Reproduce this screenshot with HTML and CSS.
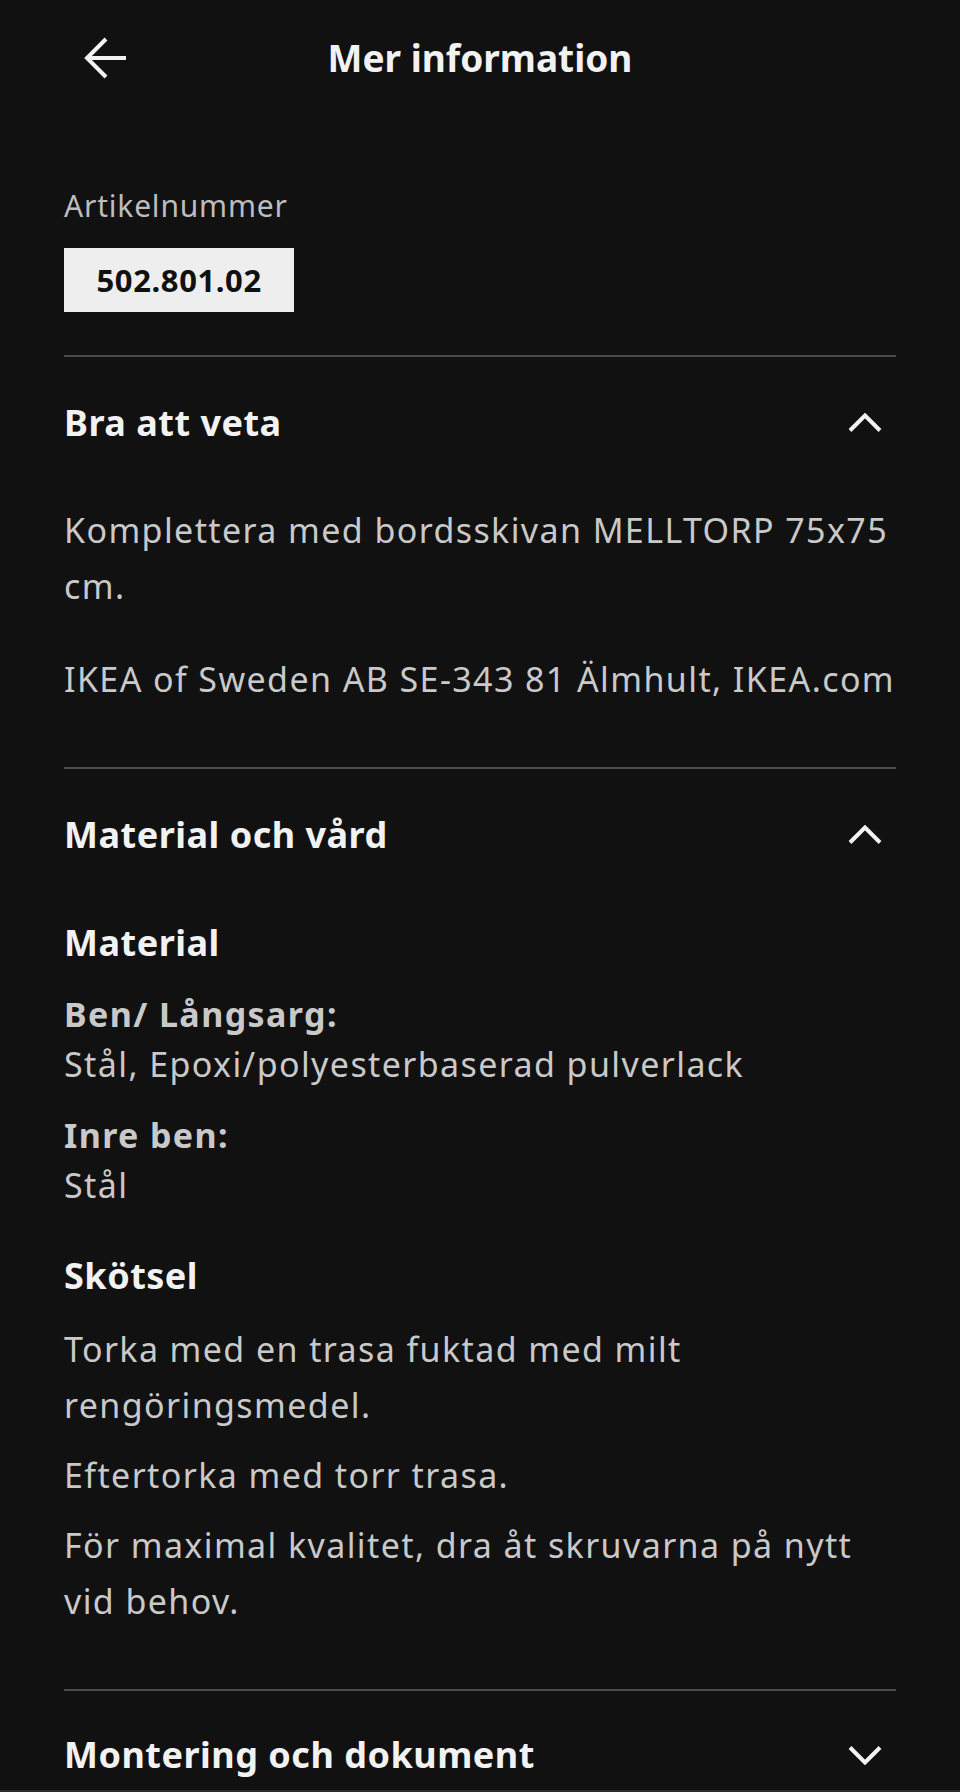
FILE: index.html
```html
<!DOCTYPE html>
<html lang="sv">
<head>
    <meta charset="UTF-8">
    <meta name="viewport" content="width=device-width, initial-scale=1.0">
    <title>Mer information</title>
    <link rel="stylesheet" href="styles.css">
</head>
<body>
    <div class="topbar">
        <div class="back">
            <svg width="48" height="48" viewBox="0 0 48 48">
                <path d="M44 24H5M24 5L5 24L24 43" fill="none" stroke="#f2f2f2" stroke-width="4"/>
            </svg>
        </div>
        <h1>Mer information</h1>
        <div></div>
    </div>

    <div class="page">
        <p class="label">Artikelnummer</p>
        <div class="artnr">502.801.02</div>

        <div class="section">
            <div class="section-head">
                <h2>Bra att veta</h2>
                <svg class="chev" width="34" height="20" viewBox="0 0 34 20">
                    <path d="M2 17.5L17 2.5L32 17.5" fill="none" stroke="#f2f2f2" stroke-width="4"/>
                </svg>
            </div>
            <div class="good">
                <p>Komplettera med bordsskivan MELLTORP 75x75 cm.</p>
                <p>IKEA of Sweden AB SE-343 81 Älmhult, IKEA.com</p>
            </div>
        </div>

        <div class="section">
            <div class="section-head">
                <h2>Material och vård</h2>
                <svg class="chev" width="34" height="20" viewBox="0 0 34 20">
                    <path d="M2 17.5L17 2.5L32 17.5" fill="none" stroke="#f2f2f2" stroke-width="4"/>
                </svg>
            </div>
            <div class="care">
                <h3 class="first">Material</h3>
                <dl>
                    <dt>Ben/ Långsarg:</dt>
                    <dd>Stål, Epoxi/polyesterbaserad pulverlack</dd>
                </dl>
                <dl>
                    <dt>Inre ben:</dt>
                    <dd>Stål</dd>
                </dl>
                <h3 class="second">Skötsel</h3>
                <p>Torka med en trasa fuktad med milt rengöringsmedel.</p>
                <p>Eftertorka med torr trasa.</p>
                <p>För maximal kvalitet, dra åt skruvarna på nytt vid behov.</p>
            </div>
        </div>

        <div class="section last">
            <div class="section-head">
                <h2>Montering och dokument</h2>
                <svg class="chev" width="34" height="20" viewBox="0 0 34 20">
                    <path d="M2 2.5L17 17.5L32 2.5" fill="none" stroke="#f2f2f2" stroke-width="4"/>
                </svg>
            </div>
        </div>
    </div>
    <div class="bottom"></div>
</body>
</html>
```

FILE: styles.css
```css
*{
    margin: 0;
    padding: 0;
    box-sizing: border-box;
}
body{
    background-color: #111111;
    color: #c9c9c9;
    font-family: "Noto Sans", "Open Sans", sans-serif;
    height: 1792px;
    overflow: hidden;
}
.topbar{
    height: 116px;
    display: grid;
    grid-template-columns: 1fr auto 1fr;
    align-items: center;
}
.back{
    padding-left: 82px;
    display: flex;
    align-items: center;
}
.topbar h1{
    font-size: 37px;
    font-weight: 700;
    color: #f2f2f2;
    line-height: 50px;
}
.page{
    padding: 0 64px;
}
.label{
    margin-top: 70px;
    font-size: 30px;
    line-height: 40px;
    letter-spacing: 0.8px;
    color: #bdbdbd;
}
.artnr{
    margin-top: 22px;
    display: inline-flex;
    align-items: center;
    height: 64px;
    padding: 0 32.5px;
    background-color: #eeeeee;
    color: #111111;
    font-size: 31px;
    font-weight: 700;
    letter-spacing: 0.6px;
}
.section{
    margin-top: 43px;
    border-top: 2px solid #4a4a4a;
    padding-bottom: 60px;
}
.section + .section{
    margin-top: 0;
}
.section.last{
    padding-bottom: 0;
}
.section-head{
    display: flex;
    align-items: center;
    justify-content: space-between;
    padding-top: 41px;
}
.section.last .section-head{
    padding-top: 39px;
}
.section-head h2{
    font-size: 36px;
    font-weight: 700;
    line-height: 50px;
    letter-spacing: 0.5px;
    color: #f2f2f2;
}
.chev{
    margin-right: 14px;
}
.good{
    padding-top: 54px;
}
.good p, .care p{
    font-size: 34px;
    line-height: 56px;
    letter-spacing: 1.4px;
}
.good p + p{
    margin-top: 37px;
}
.care h3{
    font-size: 36px;
    font-weight: 700;
    line-height: 50px;
    letter-spacing: 0.5px;
    color: #f2f2f2;
}
.care h3.first{
    margin-top: 58px;
}
.care h3.second{
    margin-top: 41px;
    margin-bottom: 20px;
}
.care dl{
    margin-top: 21px;
    font-size: 34px;
    line-height: 50px;
    letter-spacing: 1.4px;
}
.care dt{
    font-weight: 700;
}
.care p + p{
    margin-top: 14px;
}
.bottom{
    margin-top: 10px;
    height: 3px;
    background-color: #2c2c2c;
}
```
